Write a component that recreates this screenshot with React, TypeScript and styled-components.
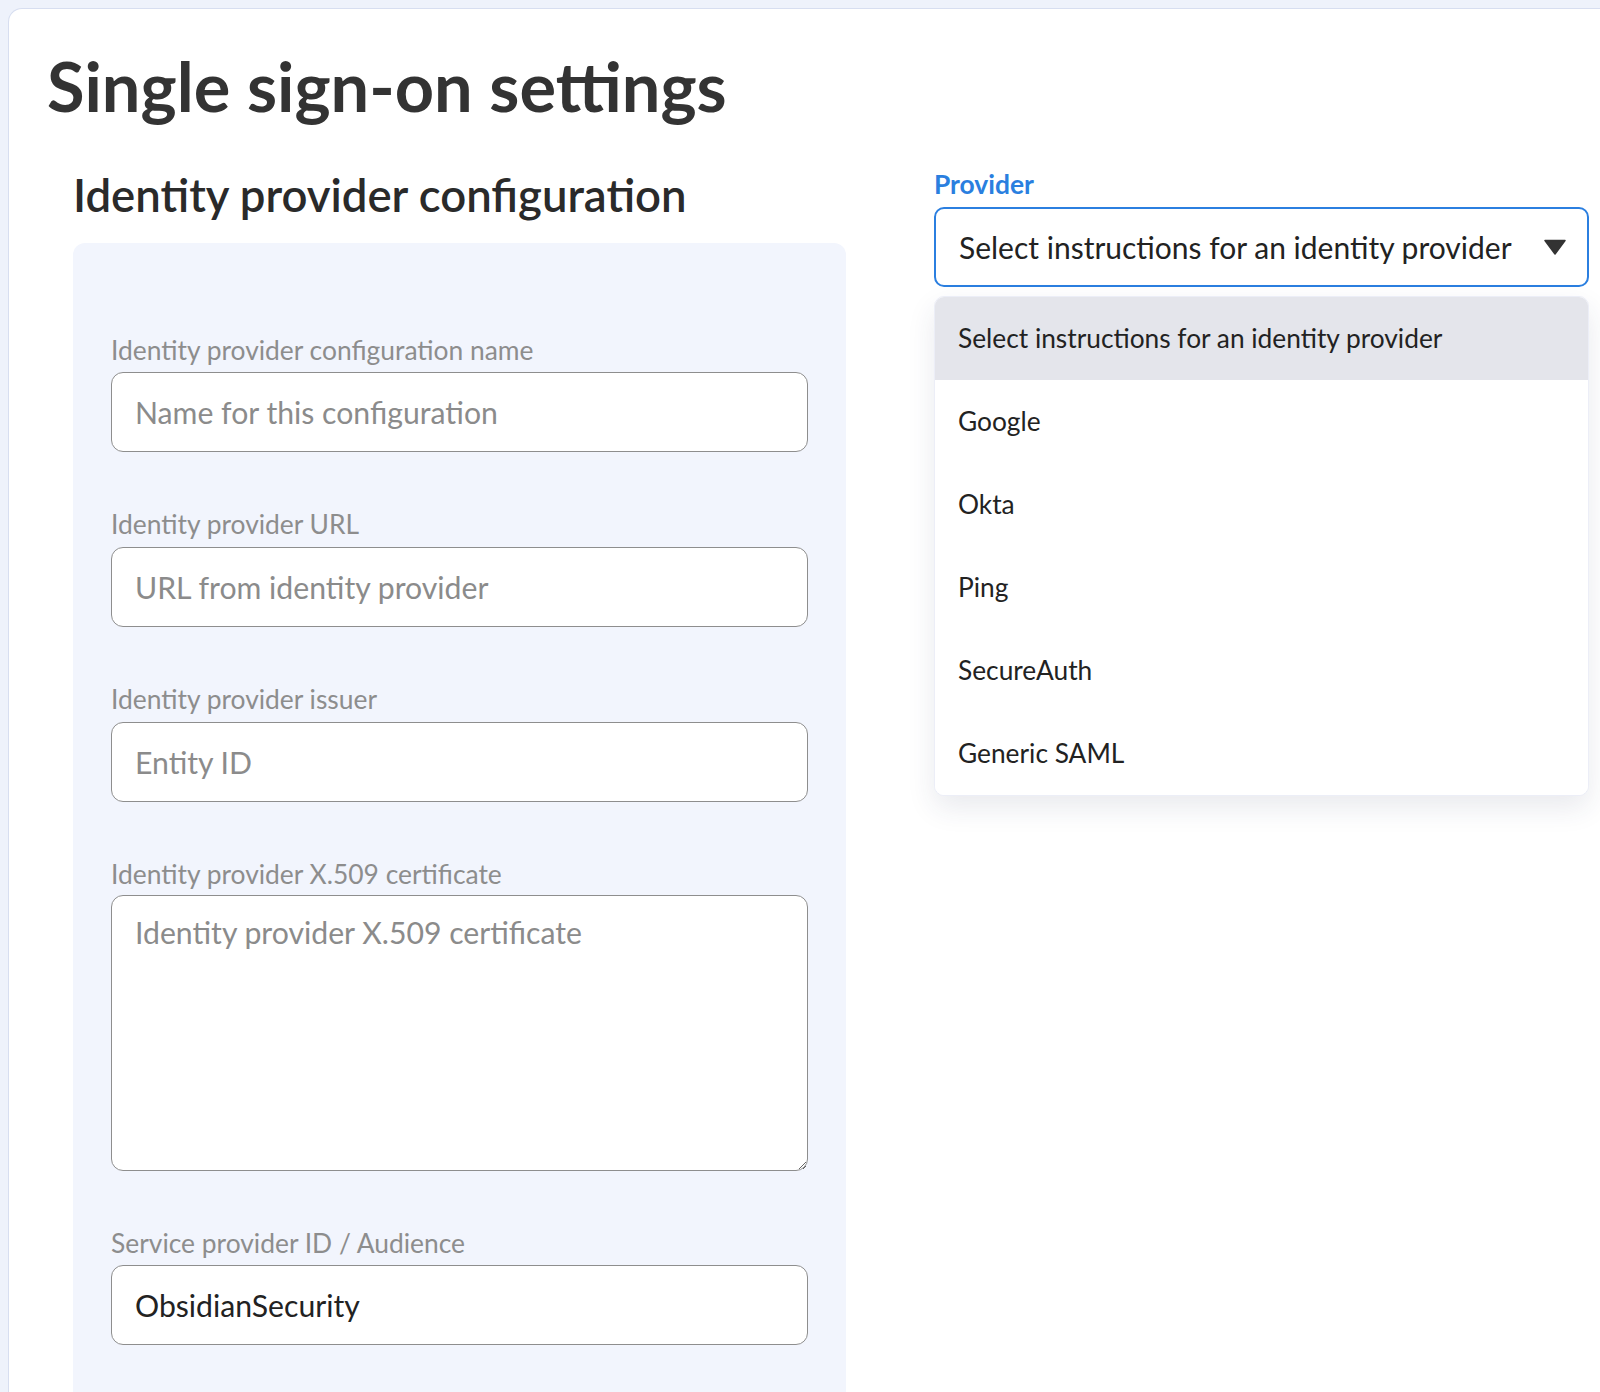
import React from "react";
import styled, { createGlobalStyle } from "styled-components";

const GlobalStyle = createGlobalStyle`
  html, body {
    margin: 0;
    padding: 0;
    background: #eef2fb;
    overflow: hidden;
  }
  body {
    font-family: Lato, "Noto Sans", "Liberation Sans", sans-serif;
    color: #2b2b2b;
  }
  * {
    box-sizing: border-box;
  }
`;

const Page = styled.div`
  height: 100vh;
  padding: 8px 0 0 8px;
`;

const Card = styled.main`
  min-height: 1500px;
  background: #fff;
  border: 1px solid #d7def0;
  border-right: none;
  border-bottom: none;
  border-top-left-radius: 14px;
  padding: 36px 0 0 38px;
`;

const Title = styled.h1`
  margin: 0;
  font-size: 68.5px;
  line-height: 1.2;
  font-weight: 700;
  color: #333;
`;

const Columns = styled.div`
  display: grid;
  grid-template-columns: 773px 655px;
  column-gap: 88px;
  align-items: start;
  margin-top: 42px;
  padding-left: 26px;
`;

const SectionHeading = styled.h2`
  margin: -1px 0 20px;
  font-size: 45.5px;
  line-height: 1.2;
  font-weight: 600;
  color: #2a2a2a;
`;

const Panel = styled.div`
  background: #f2f5fd;
  border-radius: 12px;
  padding: 92px 38px 80px;
  display: flex;
  flex-direction: column;
  gap: 57px;
`;

const FieldLabel = styled.label`
  display: block;
  margin-bottom: 6px;
  font-size: 26.4px;
  line-height: 1.2;
  font-weight: 400;
  color: #8d8d8d;
`;

const fieldBase = `
  display: block;
  width: 100%;
  background: #fff;
  border: 1.5px solid #8e8e8e;
  border-radius: 12px;
  font-family: Lato, "Noto Sans", sans-serif;
  font-size: 30.2px;
  color: #222;
  outline: none;
  &::placeholder {
    color: #8b8b8b;
    opacity: 1;
  }
`;

const TextInput = styled.input`
  ${fieldBase}
  height: 80px;
  padding: 0 23px;
`;

const TextArea = styled.textarea`
  ${fieldBase}
  height: 276px;
  margin-top: -2px;
  padding: 18px 23px;
  line-height: 1.2;
  resize: both;
`;

const ProviderLabel = styled.div`
  margin-bottom: 6px;
  font-size: 26.4px;
  line-height: 1.2;
  font-weight: 700;
  color: #2a7fdf;
`;

const SelectWrap = styled.div`
  position: relative;
`;

const SelectBox = styled.div`
  height: 80px;
  border: 2px solid #2b7fe0;
  border-radius: 10px;
  background: #fff;
  display: flex;
  align-items: center;
  justify-content: space-between;
  padding: 0 21px 0 23px;
  font-size: 30px;
  color: #222;
`;

const Caret = styled.svg`
  width: 22px;
  height: 16px;
  flex: none;
`;

const Menu = styled.ul`
  position: absolute;
  top: 89px;
  left: 0;
  right: 0;
  margin: 0;
  padding: 0;
  list-style: none;
  background: #fff;
  border: 1px solid #eceef7;
  border-radius: 10px;
  overflow: hidden;
  box-shadow: 0 12px 28px rgba(40, 50, 90, 0.1);
`;

const MenuItem = styled.li<{ $active?: boolean }>`
  height: 83px;
  display: flex;
  align-items: center;
  padding-left: 23px;
  font-size: 26.3px;
  color: #222;
  background: ${(p) => (p.$active ? "#e4e5eb" : "#fff")};
`;

const fields = [
  { label: "Identity provider configuration name", placeholder: "Name for this configuration" },
  { label: "Identity provider URL", placeholder: "URL from identity provider" },
  { label: "Identity provider issuer", placeholder: "Entity ID" },
];

const providers = [
  "Select instructions for an identity provider",
  "Google",
  "Okta",
  "Ping",
  "SecureAuth",
  "Generic SAML",
];

const Field = ({ label, placeholder }: { label: string; placeholder: string }) => (
  <div>
    <FieldLabel>{label}</FieldLabel>
    <TextInput placeholder={placeholder} />
  </div>
);

export default function App() {
  return (
    <Page>
      <GlobalStyle />
      <Card>
        <Title>Single sign-on settings</Title>
        <Columns>
          <section>
            <SectionHeading>Identity provider configuration</SectionHeading>
            <Panel>
              {fields.map((f) => (
                <Field key={f.label} label={f.label} placeholder={f.placeholder} />
              ))}
              <div>
                <FieldLabel>Identity provider X.509 certificate</FieldLabel>
                <TextArea placeholder="Identity provider X.509 certificate" />
              </div>
              <div>
                <FieldLabel>Service provider ID / Audience</FieldLabel>
                <TextInput defaultValue="ObsidianSecurity" />
              </div>
            </Panel>
          </section>
          <section>
            <ProviderLabel>Provider</ProviderLabel>
            <SelectWrap>
              <SelectBox>
                <span>{providers[0]}</span>
                <Caret viewBox="0 0 22 16">
                  <path d="M1 1.5 H21 L11 15 Z" fill="#333" stroke="#333" strokeWidth="1.5" strokeLinejoin="round" />
                </Caret>
              </SelectBox>
              <Menu>
                {providers.map((p, i) => (
                  <MenuItem key={p} $active={i === 0}>
                    {p}
                  </MenuItem>
                ))}
              </Menu>
            </SelectWrap>
          </section>
        </Columns>
      </Card>
    </Page>
  );
}
